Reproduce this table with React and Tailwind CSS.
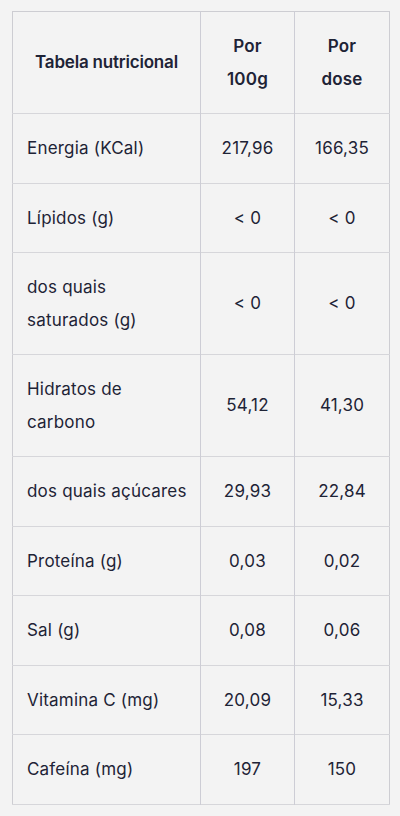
const rows = [
  ["Energia (KCal)", "217,96", "166,35"],
  ["Lípidos (g)", "< 0", "< 0"],
  ["dos quais saturados (g)", "< 0", "< 0"],
  ["Hidratos de carbono", "54,12", "41,30"],
  ["dos quais açúcares", "29,93", "22,84"],
  ["Proteína (g)", "0,03", "0,02"],
  ["Sal (g)", "0,08", "0,06"],
  ["Vitamina C (mg)", "20,09", "15,33"],
  ["Cafeína (mg)", "197", "150"],
];

export default function App() {
  return (
    <div
      className="min-h-[816px] bg-[#f3f3f3] pt-[11px] pl-3 text-[#1e2336]"
      style={{ fontFamily: "Inter, 'Noto Sans', sans-serif" }}
    >
      <table className="w-[377px] table-fixed border-collapse border border-[#cdcdd2] text-[17px] leading-[32.5px] tracking-[0.2px]">
        <colgroup>
          <col className="w-[188px]" />
          <col className="w-[94px]" />
          <col className="w-[95px]" />
        </colgroup>
        <thead>
          <tr className="border-b border-[#d6d6da]">
            <th className="px-[10px] py-[18px] font-semibold tracking-[-0.2px] text-center border-r border-[#cdcdd5]">
              Tabela nutricional
            </th>
            <th className="px-[14px] py-[18px] font-semibold text-center border-r border-[#cdcdd5]">
              Por 100g
            </th>
            <th className="px-[14px] py-[18px] font-semibold text-center">Por dose</th>
          </tr>
        </thead>
        <tbody>
          {rows.map(([label, a, b]) => (
            <tr key={label} className="border-b border-[#d6d6da]">
              <td className="pl-[14px] pr-[10px] py-[18px] font-normal border-r border-[#cdcdd5]">{label}</td>
              <td className="px-[10px] py-[18px] text-center border-r border-[#cdcdd5]">{a}</td>
              <td className="px-[10px] py-[18px] text-center">{b}</td>
            </tr>
          ))}
        </tbody>
      </table>
    </div>
  );
}
